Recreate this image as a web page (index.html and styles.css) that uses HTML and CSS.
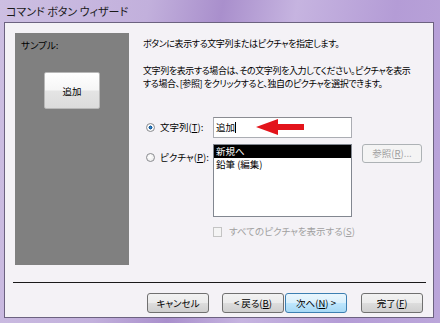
FILE: index.html
```html
<!DOCTYPE html>
<html lang="ja">
<head>
  <meta charset="UTF-8">
  <title>コマンド ボタン ウィザード</title>
  <link rel="stylesheet" href="styles.css">
</head>
<body>
  <div class="window">
    <div class="titlebar">コマンド ボタン ウィザード</div>
    <div class="client">
      <div class="main">
        <div class="sample">
          <div class="sample-label">サンプル:</div>
          <div class="sample-btn">追加</div>
        </div>
        <div class="options">
          <p class="lead">ボタンに表示する文字列またはピクチャを指定します。</p>
          <p class="desc">文字列を表示する場合は、その文字列を入力してください。ピクチャを表示<br>する場合、[参照] をクリックすると、独自のピクチャを選択できます。</p>

          <div class="row row-text">
            <span class="radio checked"></span>
            <span class="label">文字列(<u>T</u>):</span>
            <div class="textbox">
              <span>追加</span><span class="caret"></span>
              <svg class="arrow" width="48" height="16" viewBox="0 0 48 16">
                <polygon points="0,8 22,0 22,5 48,5 48,11 22,11 22,16" fill="#e3141b"/>
              </svg>
            </div>
          </div>

          <div class="row row-pic">
            <span class="radio"></span>
            <span class="label">ピクチャ(<u>P</u>):</span>
            <div class="listbox">
              <div class="item selected">新規へ</div>
              <div class="item">鉛筆 (編集)</div>
            </div>
            <div class="btn disabled browse">参照(<u>R</u>)...</div>
          </div>

          <div class="check">
            <span class="checkbox"></span>
            <span>すべてのピクチャを表示する(<u>S</u>)</span>
          </div>
        </div>
      </div>
      <div class="sep"></div>
      <div class="footer">
        <div class="btn">キャンセル</div>
        <div class="btn back">&lt; 戻る(<u>B</u>)</div>
        <div class="btn focus">次へ(<u>N</u>) &gt;</div>
        <div class="btn finish">完了(<u>F</u>)</div>
      </div>
    </div>
  </div>
</body>
</html>
```

FILE: styles.css
```css
body {
  margin: 0;
  font-family: "Noto Sans CJK JP", "Noto Sans", sans-serif;
  font-feature-settings: "palt";
  font-size: 9px;
  color: #000;
}

.window {
  width: 440px;
  height: 323px;
  box-sizing: border-box;
  padding: 0 6px 5px 4px;
  background: linear-gradient(100deg, #cdbfe2 0%, #c2b0dc 30%, #a98fcc 45%, #c6b4e0 60%, #b49cd6 80%, #bba6da 100%);
  display: flex;
  flex-direction: column;
}

.titlebar {
  height: 22px;
  line-height: 22px;
  padding-left: 2px;
  font-size: 11px;
  color: #1a1a1a;
}

.client {
  flex: 1;
  border: 1px solid #6c6280;
  background: #f4f2f6;
  display: flex;
  flex-direction: column;
}

.main {
  display: flex;
  padding: 10px 0 0 10px;
  height: 232px;
}

.sample {
  width: 114px;
  height: 232px;
  background: #808080;
  display: flex;
  flex-direction: column;
  align-items: center;
}

.sample-label {
  align-self: flex-start;
  margin: 6px 0 0 6px;
  line-height: 13px;
  font-size: 9.5px;
}

.sample-btn {
  margin-top: 20px;
  width: 56px;
  height: 37px;
  box-sizing: border-box;
  border: 1px solid #b8b8b8;
  border-radius: 2px;
  background: linear-gradient(#ffffff 0%, #f6f6f6 48%, #e4e4e4 52%, #dcdcdc 100%);
  display: flex;
  align-items: center;
  justify-content: center;
  font-size: 9.5px;
}

.options {
  margin-left: 14px;
  flex: 1;
}

.lead {
  margin: 4px 0 0;
  line-height: 13px;
  white-space: nowrap;
  letter-spacing: -0.4px;
}

.desc {
  margin: 14px 0 0;
  line-height: 13px;
  white-space: nowrap;
  letter-spacing: -0.4px;
}

.row {
  display: flex;
  align-items: flex-start;
}

.row-text {
  margin-top: 27px;
  align-items: center;
}

.row-pic {
  margin-top: 6px;
}

.radio {
  width: 9px;
  height: 9px;
  margin-left: 3px;
  border: 1px solid #8a8c90;
  border-radius: 50%;
  box-sizing: border-box;
  background: radial-gradient(circle at 40% 40%, #ffffff 0%, #e6e6e6 100%);
  flex: none;
}

.radio.checked {
  background: radial-gradient(circle, #2a8ad4 0%, #14508c 35%, #ffffff 45%, #e8e8e8 100%);
}

.row-pic .radio {
  margin-top: 9px;
}

.label {
  margin-left: 5px;
  width: 53px;
  line-height: 13px;
  font-size: 9.5px;
}

.row-pic .label {
  margin-top: 7px;
}

.textbox {
  position: relative;
  width: 139px;
  height: 21px;
  box-sizing: border-box;
  border: 1px solid #abadb3;
  border-top-color: #8a8c92;
  background: #fff;
  display: flex;
  align-items: center;
  padding-left: 2px;
  line-height: 13px;
  font-size: 9.5px;
}

.caret {
  width: 1px;
  height: 11px;
  background: #000;
}

.arrow {
  position: absolute;
  left: 42px;
  top: 1px;
}

.listbox {
  width: 139px;
  height: 73px;
  box-sizing: border-box;
  border: 1px solid #828790;
  background: #fff;
}

.item {
  height: 13px;
  line-height: 13px;
  padding-left: 2px;
  font-size: 9.5px;
}

.item.selected {
  background: #000;
  color: #fff;
}

.btn {
  height: 20px;
  box-sizing: border-box;
  border: 1px solid #707070;
  border-radius: 3px;
  background: linear-gradient(#f2f2f2 0%, #ebebeb 50%, #dddddd 51%, #cfcfcf 100%);
  display: flex;
  align-items: center;
  justify-content: center;
  line-height: 13px;
  font-size: 9.5px;
  white-space: nowrap;
}

.btn.disabled {
  border-color: #adb2b5;
  background: #f4f4f4;
  color: #a0a0a0;
}

.browse {
  width: 60px;
  height: 19px;
  margin-left: 10px;
}

.check {
  display: flex;
  align-items: center;
  margin: 8px 0 0 70px;
  color: #a0a0a0;
  line-height: 13px;
  font-size: 9.5px;
}

.checkbox {
  width: 9px;
  height: 10px;
  box-sizing: border-box;
  border: 1px solid #c4c4c4;
  background: #f4f4f4;
  margin-right: 7px;
}

.sep {
  margin: 17px 7px 0 8px;
  height: 1px;
  background: #1a1a1a;
}

.footer {
  display: flex;
  justify-content: flex-end;
  margin: 10px 10px 0 0;
}

.footer .btn {
  width: 62px;
}

.footer .back {
  margin-left: 13px;
}

.footer .focus {
  margin-left: 1px;
  border-color: #3c7fb1;
  background: linear-gradient(#eaf6fd 0%, #d9f0fc 50%, #bee6fd 51%, #a7d9f5 100%);
}

.footer .finish {
  margin-left: 14px;
}
```
